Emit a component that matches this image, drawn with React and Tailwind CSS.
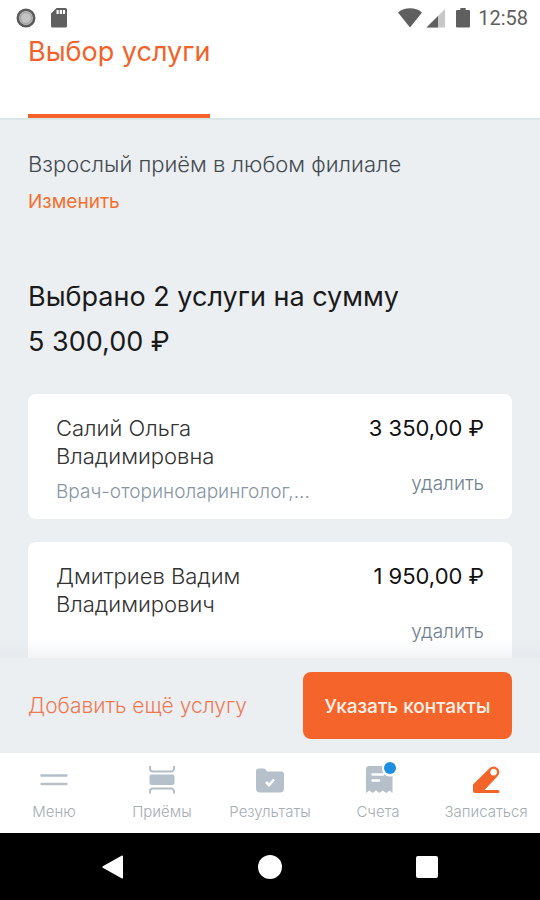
import React from 'react';

const services = [
  {
    id: 1,
    doctor: 'Салий Ольга Владимировна',
    speciality: 'Врач-оториноларинголог,...',
    price: '3 350,00 ₽',
  },
  {
    id: 2,
    doctor: 'Дмитриев Вадим Владимирович',
    speciality: '',
    price: '1 950,00 ₽',
  },
];

const StatusBar = () => (
  <div className="flex h-9 items-center justify-between pl-4 pr-3 text-[#5f5f5f]">
    <div className="flex items-center gap-3.5">
      <svg className="h-5 w-5" viewBox="0 0 20 20">
        <circle cx="10" cy="10" r="8.2" fill="#c4c4c4" stroke="#5a5a5a" strokeWidth="2.6" />
        <circle cx="10" cy="10" r="5.6" fill="none" stroke="#a8a8a8" strokeWidth="1.6" />
      </svg>
      <svg className="h-5 w-4.5" viewBox="0 0 16 20" fill="currentColor">
        <path
          fillRule="evenodd"
          d="M5.5 0H14.5a1.5 1.5 0 0 1 1.5 1.5V18a1.5 1.5 0 0 1-1.5 1.5H1.5A1.5 1.5 0 0 1 0 18V5.5ZM5.5 2V6H7.7V2ZM8.7 2V6H10.9V2ZM11.9 2V6H14.1V2Z"
        />
      </svg>
    </div>
    <div className="flex items-center">
      <svg className="h-5 w-6" viewBox="0 0 24 20" fill="currentColor">
        <path d="M12 19.5 0 4.5C3.4 1.7 7.5.3 12 .3S20.6 1.7 24 4.5Z" />
      </svg>
      <svg className="ml-1 h-5 w-5" viewBox="0 0 20 20" fill="currentColor">
        <path d="M19 1V19.5H.5Z" opacity=".35" />
        <path d="M12 8V19.5H.5Z" />
      </svg>
      <svg className="ml-2.5 h-5 w-3.5" viewBox="0 0 13 20" fill="currentColor" preserveAspectRatio="none">
        <path d="M4 0H9V2H12a1 1 0 0 1 1 1V18.5a1 1 0 0 1-1 1H1a1 1 0 0 1-1-1V3A1 1 0 0 1 1 2H4Z" />
      </svg>
      <span className="ml-2 font-['Roboto',sans-serif] text-xl">12:58</span>
    </div>
  </div>
);

const ServiceCard = ({ service }) => (
  <li className="flex min-h-[125px] rounded-lg bg-white px-7 pt-5 pb-3">
    <div className="min-w-0 flex-1 pr-4">
      <h3 className="max-w-[240px] text-[22px] leading-7 font-light text-[#333]">{service.doctor}</h3>
      {service.speciality && (
        <p className="mt-2 truncate text-[19px] leading-7 font-light text-[#8696a4]">
          {service.speciality}
        </p>
      )}
    </div>
    <div className="flex shrink-0 flex-col items-end">
      <span className="text-[22px] leading-7 text-[#111]">{service.price}</span>
      <button type="button" className="mt-7 text-[19px] leading-7 font-light text-[#70808e]">
        удалить
      </button>
    </div>
  </li>
);

const MenuIcon = () => (
  <svg className="h-8 w-8" viewBox="0 0 32 32" fill="none" strokeWidth="2.4" strokeLinecap="round">
    <path d="M3.5 11.5H28.5" stroke="#b3c0ca" />
    <path d="M3.5 20H28.5" stroke="#bcc1c5" />
  </svg>
);

const VisitsIcon = () => (
  <svg className="h-8 w-8" viewBox="0 0 32 32" fill="none" stroke="#b5bdc4" strokeWidth="2">
    <path d="M4 2V4.5a3 3 0 0 0 3 3H25a3 3 0 0 0 3-3V2" />
    <rect x="3.5" y="10.5" width="25" height="10.5" rx="2" fill="#b4c1cb" stroke="none" />
    <path d="M4 29.5V27.500a3 3 0 0 1 3-3H25a3 3 0 0 1 3 3v2" />
  </svg>
);

const ResultsIcon = () => (
  <svg className="h-8 w-8" viewBox="0 0 32 32">
    <path
      d="M5 4.5H9.500a3 3 0 0 1 2.6 1.5L13 7.5H27a3 3 0 0 1 3 3V24.5a4 4 0 0 1-4 4H6a4 4 0 0 1-4-4V7.5A3 3 0 0 1 5 4.5Z"
      fill="#b5c0ca"
    />
    <path d="m12 18 3 3 5-5.500" fill="none" stroke="#fff" strokeWidth="2.6" />
  </svg>
);

const BillsIcon = () => (
  <svg className="h-8 w-8" viewBox="0 0 32 32">
    <path
      d="M7 2H30.500V29L27.500 26.500 24.200 29 20.800 26.500 17.400 29 14 26.500 10.600 29 7.300 26.500 4 29V5A3 3 0 0 1 7 2Z"
      fill="#b5c0ca"
    />
    <path d="M10.500 10.500H21M10.500 16.500H17" stroke="#fff" strokeWidth="2.400" strokeLinecap="round" />
    <circle cx="28" cy="4.500" r="8" fill="#fff" />
  </svg>
);

const BookIcon = () => (
  <svg className="h-8 w-8" viewBox="0 0 32 32" fill="#f2642a">
    <path
      fillRule="evenodd"
      d="M3 20.5 19.500 4.200a5.700 5.700 0 0 1 8.100 0 5.700 5.700 0 0 1 0 8.100L14.500 25.900H28a1.500 1.500 0 0 1 0 3H5a2 2 0 0 1-2-2ZM23.600 4.800a3.400 3.400 0 1 0 .01 0Z"
    />
  </svg>
);

const tabs = [
  { label: 'Меню', icon: MenuIcon },
  { label: 'Приёмы', icon: VisitsIcon },
  { label: 'Результаты', icon: ResultsIcon },
  { label: 'Счета', icon: BillsIcon, badge: true },
  { label: 'Записаться', icon: BookIcon },
];

const TabBar = () => (
  <nav className="grid h-20 shrink-0 grid-cols-5 bg-white">
    {tabs.map(({ label, icon: Icon, badge }) => (
      <button key={label} type="button" className="flex min-w-0 flex-col items-center pt-[11px]">
        <span className="relative">
          <Icon />
          {badge && (
            <span className="absolute -top-0.5 -right-0.5 h-3 w-3 rounded-full bg-[#1e8ee0]" />
          )}
        </span>
        <span className="mt-1 text-[15px] leading-6 font-light whitespace-nowrap text-[#a5adb4]">
          {label}
        </span>
      </button>
    ))}
  </nav>
);

const SystemBar = () => (
  <div className="grid h-[67px] shrink-0 grid-cols-3 items-center bg-black px-[34px]">
    <button type="button" aria-label="Назад" className="flex justify-center">
      <svg className="h-6 w-6" viewBox="0 0 24 24" fill="#fff">
        <path d="M22 1.5V22.5a1 1 0 0 1-1.500.8L1.800 12.800a1 1 0 0 1 0-1.600L20.500.700A1 1 0 0 1 22 1.500Z" />
      </svg>
    </button>
    <button type="button" aria-label="Домой" className="flex justify-center">
      <span className="h-6 w-6 rounded-full bg-white" />
    </button>
    <button type="button" aria-label="Недавние" className="flex justify-center">
      <span className="h-[22px] w-[22px] rounded-xs bg-white" />
    </button>
  </div>
);

const App = () => (
  <div className="flex h-screen flex-col bg-[#ebeff2] font-['Inter','Open_Sans',sans-serif]">
    <header className="shrink-0 border-b-2 border-[#dbe6e8] bg-white">
      <StatusBar />
      <div className="flex px-7">
        <h1 className="h-[82px] border-b-4 border-[#f2622a] text-[27px] leading-8 text-[#f2622a]">
          Выбор услуги
        </h1>
      </div>
    </header>

    <div className="relative min-h-0 flex-1 overflow-hidden">
      <main className="px-7 pt-7">
        <p className="text-[22px] leading-8 font-light text-[#444b50]">
          Взрослый приём в любом филиале
        </p>
        <a href="#edit" className="mt-2 inline-block text-[19px] leading-7 text-[#f4702f]">
          Изменить
        </a>
        <h2 className="mt-[58px] text-[27px] leading-[45px] text-[#1a1a1a]">
          Выбрано 2 услуги на сумму
          <br />
          5 300,00 ₽
        </h2>
        <ul className="mt-[30px] space-y-[23px]">
          {services.map(service => (
            <ServiceCard key={service.id} service={service} />
          ))}
        </ul>
      </main>
      {/* Fade above the action bar */}
      <div className="pointer-events-none absolute inset-x-0 bottom-0 h-5 bg-linear-to-t from-[#dfe4e8]/40 to-transparent" />
    </div>

    <div className="flex h-[95px] shrink-0 items-center justify-between px-7">
      <button type="button" className="text-[21px] font-light text-[#ee7a55]">
        Добавить ещё услугу
      </button>
      <button
        type="button"
        className="h-[67px] w-[209px] rounded-lg bg-[#f5652b] pt-1 text-[19px] font-medium text-[#fff1ea]"
      >
        Указать контакты
      </button>
    </div>

    <TabBar />
    <SystemBar />
  </div>
);

export default App;
